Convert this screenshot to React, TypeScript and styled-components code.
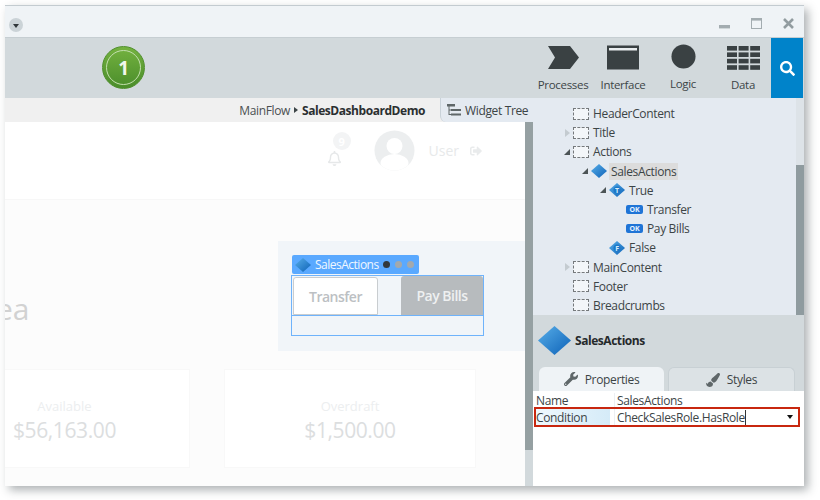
import React from 'react';
import styled, { createGlobalStyle } from 'styled-components';
import { FaPaintBrush, FaRegBell, FaSearch, FaSignOutAlt, FaWrench } from 'react-icons/fa';

const GlobalStyle = createGlobalStyle`
  html, body {
    margin: 0;
    padding: 0;
    background: #fff;
  }
  body {
    font-family: "Open Sans", "Noto Sans", sans-serif;
    font-size: 12px;
    letter-spacing: -0.35px;
    color: #3c4446;
  }
`;

const Page = styled.div`
  width: 820px;
  height: 500px;
  padding: 5px 16px 14px 5px;
  box-sizing: border-box;
  overflow: hidden;
`;

const Window = styled.div`
  width: 799px;
  height: 481px;
  display: flex;
  flex-direction: column;
  border-top: 1px solid #c3cbd0;
  box-sizing: border-box;
  background: #fff;
  box-shadow: 4px 4px 9px rgba(40, 50, 55, 0.38);
`;

const TitleBar = styled.div`
  height: 31px;
  flex-shrink: 0;
  background: #eff3f6;
  display: flex;
  align-items: center;
  padding: 3px 10px 0 4px;
  box-sizing: border-box;
`;

const MenuDot = styled.div`
  width: 14px;
  height: 14px;
  margin-top: 4px;
  border-radius: 50%;
  background: #cbd3d7;
  display: flex;
  align-items: center;
  justify-content: center;

  &::after {
    content: '';
    margin-top: 2px;
    border: 3px solid transparent;
    border-top: 4px solid #30373a;
    border-bottom: 0;
  }
`;

const WindowControls = styled.div`
  margin-left: auto;
  display: flex;
  gap: 21px;
  align-items: center;
`;

const Toolbar = styled.div`
  height: 61px;
  flex-shrink: 0;
  background: #d2d9dc;
  display: flex;
  align-items: stretch;
  border-top: 1px solid #c6ced2;
  box-sizing: border-box;
`;

const VersionBadge = styled.div`
  width: 43px;
  height: 43px;
  margin: 8px 0 0 97px;
  border-radius: 50%;
  background: linear-gradient(#74b23f, #4a8d2b);
  border: 1px solid #4f8f2c;
  box-sizing: border-box;
  display: flex;
  align-items: center;
  justify-content: center;

  span {
    width: 35px;
    height: 35px;
    border-radius: 50%;
    border: 1px solid #c3dfae;
    box-sizing: border-box;
    display: flex;
    align-items: center;
    justify-content: center;
    color: #f2f7ec;
    font-size: 19px;
    font-weight: 700;
  }
`;

const NavGroup = styled.div`
  margin-left: auto;
  display: flex;
  gap: 4px;
`;

const NavItem = styled.div`
  width: 56px;
  display: flex;
  flex-direction: column;
  align-items: center;
  padding-top: 7px;
  box-sizing: border-box;

  svg {
    height: 25px;
  }

  span {
    margin-top: 7px;
    font-size: 11.5px;
    letter-spacing: -0.3px;
    line-height: 16px;
    white-space: nowrap;
    color: #3d4547;
  }
`;

const SearchButton = styled.div`
  width: 32px;
  margin-right: 1px;
  background: #0083ca;
  color: #fff;
  display: flex;
  align-items: center;
  justify-content: center;
  font-size: 15px;
`;

const Workspace = styled.div`
  flex: 1;
  min-height: 0;
  display: flex;
`;

const LeftColumn = styled.div`
  width: 528px;
  flex-shrink: 0;
  display: flex;
  flex-direction: column;
`;

const BreadcrumbBar = styled.div`
  height: 24px;
  flex-shrink: 0;
  background: #f0f0f0;
  display: flex;
  align-items: center;
  justify-content: flex-end;
  color: #4a4f51;
`;

const Crumbs = styled.div`
  display: flex;
  align-items: center;
  gap: 4px;
  margin-right: 15px;

  b {
    font-weight: 700;
    letter-spacing: -0.45px;
    color: #2b2f30;
  }

  i {
    border: 3px solid transparent;
    border-left: 4px solid #3c4446;
    border-right: 0;
  }
`;

const TreeTab = styled.div`
  width: 93px;
  height: 24px;
  background: #e4eaf1;
  border-left: 1px solid #c9d2d9;
  border-bottom-left-radius: 6px;
  box-sizing: border-box;
  display: flex;
  align-items: center;
  gap: 4px;
  padding-left: 6px;
  color: #3c4446;
`;

const CanvasFrame = styled.div`
  flex: 1;
  min-height: 0;
  display: flex;
`;

const Canvas = styled.div`
  flex: 1;
  min-width: 0;
  overflow: hidden;
  background: #fcfcfc;
  display: flex;
  flex-direction: column;
`;

const UserBar = styled.div`
  height: 78px;
  flex-shrink: 0;
  background: #fff;
  border-bottom: 1px solid #f7f7f7;
  box-sizing: border-box;
  display: flex;
  align-items: center;
  justify-content: flex-end;
  padding: 0 43px 20px 0;
  color: #e9ebec;
  letter-spacing: 0;
`;

const BellWrap = styled.div`
  position: relative;
  width: 16px;
  display: flex;
  font-size: 15px;
  color: #e6e8e9;
  margin-top: 16px;
`;

const BellCount = styled.span`
  position: absolute;
  left: 6px;
  top: -19px;
  width: 18px;
  height: 18px;
  border-radius: 50%;
  background: #f3f4f5;
  color: #fff;
  font-size: 11px;
  font-weight: 700;
  display: flex;
  align-items: center;
  justify-content: center;
`;

const Avatar = styled.svg`
  width: 41px;
  height: 41px;
  margin: 0 14px 0 31px;
`;

const UserName = styled.span`
  font-size: 14px;
  color: #e7e9ea;
  margin-right: 11px;
`;

const HeroRow = styled.div`
  height: 169px;
  flex-shrink: 0;
  display: flex;
  align-items: flex-start;
  justify-content: space-between;
`;

const ClippedTitle = styled.div`
  font-size: 30px;
  line-height: 40px;
  margin: 89px 0 0 -9px;
  letter-spacing: 0;
  color: #d2d2d2;
`;

const SelectionArea = styled.div`
  width: 247px;
  height: 110px;
  margin-top: 41px;
  background: #f1f5f9;
  padding: 14px 0 0 13px;
  box-sizing: border-box;
`;

const WidgetLabel = styled.div`
  width: 127px;
  height: 19px;
  margin-left: 1px;
  background: #5aa9ff;
  border-radius: 2px;
  display: flex;
  align-items: center;
  padding-left: 3px;
  box-sizing: border-box;
  gap: 4px;
  color: #f0f7ff;
  font-size: 12px;
  letter-spacing: -0.5px;
`;

const StateDot = styled.span<{ $active?: boolean }>`
  width: 7px;
  height: 7px;
  border-radius: 50%;
  background: ${({ $active }) => ($active ? '#32383c' : '#a3a9ad')};
  flex-shrink: 0;
`;

const DotRow = styled.div`
  display: flex;
  gap: 5px;
`;

const WidgetBody = styled.div`
  width: 193px;
  margin-top: 1px;
  border: 1px solid #6fb3fb;
  box-sizing: border-box;
`;

const ButtonRow = styled.div`
  height: 39px;
  display: flex;
  justify-content: space-between;
  align-items: flex-end;
  padding-left: 1px;
  border-bottom: 1px solid #6fb3fb;
  box-sizing: content-box;
`;

const PreviewButton = styled.div<{ $primary?: boolean }>`
  width: ${({ $primary }) => ($primary ? '82px' : '85px')};
  height: ${({ $primary }) => ($primary ? '39px' : '38px')};
  box-sizing: border-box;
  border-radius: 3px 3px 0 0;
  display: flex;
  align-items: center;
  justify-content: center;
  font-size: 14px;
  font-weight: 600;
  letter-spacing: -0.5px;
  background: ${({ $primary }) => ($primary ? '#b7bbbe' : '#fff')};
  color: ${({ $primary }) => ($primary ? '#eef0f1' : '#bcc0c3')};
  border: ${({ $primary }) => ($primary ? '0' : '1px solid #c9cdd0')};
`;

const EmptyRow = styled.div`
  height: 19px;
`;

const CardRow = styled.div`
  display: flex;
  gap: 34px;
`;

const Card = styled.div<{ $width: number; $clipped?: boolean }>`
  width: ${({ $width }) => $width}px;
  height: 99px;
  background: #fff;
  border: 1px solid #f8f8f8;
  border-left-width: ${({ $clipped }) => ($clipped ? 0 : 1)}px;
  padding: 27px ${({ $clipped }) => ($clipped ? 65 : 0)}px 0 0;
  box-sizing: border-box;
  display: flex;
  flex-direction: column;
  align-items: center;
`;

const CardLabel = styled.div`
  font-size: 13px;
  line-height: 18px;
  letter-spacing: 0;
  color: #eceeef;
`;

const CardValue = styled.div`
  margin-top: 1px;
  font-size: 21px;
  line-height: 28px;
  letter-spacing: -0.4px;
  color: #dcdedf;
`;

const CanvasScrollbar = styled.div`
  width: 8px;
  flex-shrink: 0;
  background: #d2d9dc;

  &::before {
    content: '';
    display: block;
    height: 328px;
    background: #95a0a2;
  }
`;

const RightColumn = styled.div`
  flex: 1;
  min-width: 0;
  display: flex;
  flex-direction: column;
`;

const TreePanel = styled.div`
  height: 217px;
  flex-shrink: 0;
  display: flex;
  background: #e4eaf1;
`;

const TreeList = styled.div`
  flex: 1;
  padding-top: 6px;
  box-sizing: border-box;
`;

const TreeRow = styled.div<{ $indent: number }>`
  height: 19.2px;
  display: flex;
  align-items: center;
  padding-left: ${({ $indent }) => $indent}px;
  color: #3c4446;
`;

const Expander = styled.span<{ $state?: 'open' | 'closed' }>`
  width: 10px;
  flex-shrink: 0;
  display: flex;
  align-items: center;

  &::before {
    content: '';
    display: ${({ $state }) => ($state ? 'block' : 'none')};
    ${({ $state }) =>
      $state === 'open'
        ? 'border-style: solid; border-width: 0 0 6px 6px; border-color: transparent transparent #4c5456 transparent; margin-left: 1px;'
        : 'border-style: solid; border-width: 4px 0 4px 5px; border-color: transparent transparent transparent #c4cbd0; margin-left: 2px;'}
  }
`;

const DashedBox = styled.span`
  width: 16px;
  height: 12px;
  background: #f3f6f9;
  border: 1px dashed #75797c;
  box-sizing: border-box;
  margin-right: 2px;
  flex-shrink: 0;
`;

const TreeDiamond = styled.span`
  display: flex;
  margin-right: 2px;
`;

const TreeText = styled.span<{ $selected?: boolean }>`
  line-height: 17px;
  padding: 0 2px;
  background: ${({ $selected }) => ($selected ? '#dcdcdc' : 'transparent')};
`;

const OkChip = styled.span`
  width: 17px;
  height: 9px;
  border-radius: 2px;
  background: #1f74d6;
  color: #e6f2ff;
  font-size: 7px;
  font-weight: 700;
  line-height: 9px;
  letter-spacing: 0;
  text-align: center;
  margin-right: 2px;
  flex-shrink: 0;
`;

const TreeScrollbar = styled.div`
  width: 8px;
  flex-shrink: 0;
  display: flex;
  flex-direction: column;
  justify-content: flex-end;
  background: #dde3e8;

  &::before {
    content: '';
    height: 150px;
    background: #8f9b9f;
  }
`;

const DetailPanel = styled.div`
  height: 76px;
  flex-shrink: 0;
  background: #d2d9dc;
  display: flex;
  flex-direction: column;
`;

const DetailHeader = styled.div`
  height: 52px;
  display: flex;
  align-items: center;
  gap: 4px;
  padding: 0 0 2px 5px;
  box-sizing: border-box;
  font-weight: 700;
  letter-spacing: -0.45px;
  color: #25292b;
`;

const Tabs = styled.div`
  display: flex;
  gap: 4px;
  padding-left: 6px;
`;

const Tab = styled.div<{ $active?: boolean }>`
  width: ${({ $active }) => ($active ? '125px' : '127px')};
  height: 24px;
  box-sizing: border-box;
  border-radius: 6px 6px 0 0;
  background: ${({ $active }) => ($active ? '#eff3f6' : '#dce2e5')};
  border: ${({ $active }) => ($active ? '0' : '1px solid #c8d0d4')};
  border-bottom: 0;
  display: flex;
  align-items: center;
  justify-content: center;
  gap: 7px;
  color: #3c4446;

  svg {
    font-size: 14px;
    color: #5f6769;
  }
`;

const PropertyGrid = styled.div`
  flex: 1;
  min-height: 0;
  background: #fff;
  padding-left: 1px;
`;

const PropertyRow = styled.div<{ $focused?: boolean }>`
  height: ${({ $focused }) => ($focused ? '20px' : '16px')};
  width: 266px;
  display: flex;
  align-items: center;
  box-sizing: border-box;
  border: ${({ $focused }) => ($focused ? '2px solid #c8270f' : '0')};
  padding: ${({ $focused }) => ($focused ? '0' : '2px 0 0 2px')};
  color: #3c4446;
`;

const PropertyName = styled.div<{ $highlight?: boolean }>`
  width: 79px;
  height: 100%;
  display: flex;
  align-items: center;
  flex-shrink: 0;
  background: ${({ $highlight }) =>
    $highlight ? 'linear-gradient(90deg, #eff8fd, #d5ebf8 95%, #fff 95%)' : 'transparent'};
  border-right: 1px solid #edf0f2;
  box-sizing: border-box;
`;

const PropertyValue = styled.div`
  flex: 1;
  display: flex;
  align-items: center;
  padding-left: 2px;
`;

const Caret = styled.span`
  width: 1px;
  height: 15px;
  background: #333;
`;

const DropArrow = styled.span`
  margin-left: auto;
  margin-right: 5px;
  border: 3px solid transparent;
  border-top: 4px solid #111;
  border-bottom: 0;
`;

function Diamond({ size, letter }: { size: number; letter?: string }) {
  const id = `diamond-${size}-${letter ?? 'x'}`;
  return (
    <svg width={size} height={size} viewBox="0 0 32 32" style={{ flexShrink: 0 }}>
      <defs>
        <linearGradient id={id} x1="0" y1="0" x2="1" y2="1">
          <stop offset="0" stopColor="#58aee8" />
          <stop offset="1" stopColor="#0d62b8" />
        </linearGradient>
      </defs>
      <path d="M16 2 L32 16 L16 30 L0 16 Z" fill={`url(#${id})`} />
      {letter && (
        <>
          <circle cx="16" cy="16" r="7" fill="#1c78c8" />
          <text x="16" y="21" textAnchor="middle" fontSize="14" fontWeight="700" fill="#d8ecfa">
            {letter}
          </text>
        </>
      )}
    </svg>
  );
}

function TreeIcon() {
  return (
    <svg width="14" height="14" viewBox="0 0 14 14" fill="#5f6769">
      <rect x="0" y="1" width="8" height="2.5" />
      <rect x="1.5" y="3" width="1" height="9" />
      <rect x="4" y="6" width="10" height="2" />
      <rect x="4" y="10.5" width="10" height="2" />
      <rect x="2" y="6.5" width="2" height="1" />
      <rect x="2" y="11" width="2" height="1" />
    </svg>
  );
}

function DataIcon() {
  const rows = [0, 6.4, 12.8, 19.2];
  const cols = [0, 11.6, 23.2];
  return (
    <svg width="33" height="25" viewBox="0 0 33 25" fill="#3a4143">
      {rows.map((y) => cols.map((x) => <rect key={`${x}-${y}`} x={x} y={y + 1} width="10" height="4.6" />))}
    </svg>
  );
}

export default function App() {
  return (
    <Page>
      <GlobalStyle />
      <Window>
        <TitleBar>
          <MenuDot />
          <WindowControls>
            <svg width="11" height="11" viewBox="0 0 11 11">
              <rect x="0" y="7" width="11" height="3.4" fill="#a3acb0" />
            </svg>
            <svg width="11" height="11" viewBox="0 0 11 11">
              <rect x="0.5" y="0.5" width="10" height="10" fill="none" stroke="#a3acb0" />
              <rect x="0" y="0" width="11" height="2.6" fill="#a3acb0" />
            </svg>
            <svg width="11" height="11" viewBox="0 0 11 11">
              <path d="M1 1 L10 10 M10 1 L1 10" stroke="#929ca0" strokeWidth="2.6" />
            </svg>
          </WindowControls>
        </TitleBar>

        <Toolbar>
          <VersionBadge>
            <span>1</span>
          </VersionBadge>
          <NavGroup>
            <NavItem>
              <svg width="33" height="25" viewBox="0 0 33 25">
                <path d="M1 1 H23 L32 12.5 L23 24 H1 L8 12.5 Z" fill="#3a4143" />
              </svg>
              <span>Processes</span>
            </NavItem>
            <NavItem>
              <svg width="32" height="25" viewBox="0 0 32 25">
                <rect x="0" y="0.5" width="32" height="24" fill="#3a4143" />
                <rect x="2" y="3" width="28" height="2.5" fill="#e8ecee" />
              </svg>
              <span>Interface</span>
            </NavItem>
            <NavItem>
              <svg width="27" height="27" viewBox="0 0 27 27" style={{ marginTop: -1 }}>
                <circle cx="13.5" cy="13.5" r="13" fill="#3a4143" />
              </svg>
              <span>Logic</span>
            </NavItem>
            <NavItem>
              <DataIcon />
              <span>Data</span>
            </NavItem>
          </NavGroup>
          <SearchButton>
            <FaSearch />
          </SearchButton>
        </Toolbar>

        <Workspace>
          <LeftColumn>
            <BreadcrumbBar>
              <Crumbs>
                MainFlow
                <i />
                <b>SalesDashboardDemo</b>
              </Crumbs>
              <TreeTab>
                <TreeIcon />
                Widget Tree
              </TreeTab>
            </BreadcrumbBar>
            <CanvasFrame>
              <Canvas>
                <UserBar>
                  <BellWrap>
                    <FaRegBell />
                    <BellCount>9</BellCount>
                  </BellWrap>
                  <Avatar viewBox="0 0 41 41">
                    <defs>
                      <clipPath id="avatar-clip">
                        <circle cx="20.5" cy="20.5" r="20" />
                      </clipPath>
                    </defs>
                    <circle cx="20.5" cy="20.5" r="20" fill="#eceeef" />
                    <g clipPath="url(#avatar-clip)" fill="#fff">
                      <circle cx="20.5" cy="16" r="8" />
                      <ellipse cx="20.5" cy="33" rx="14" ry="9" />
                    </g>
                  </Avatar>
                  <UserName>User</UserName>
                  <FaSignOutAlt />
                </UserBar>
                <HeroRow>
                  <ClippedTitle>ea</ClippedTitle>
                  <SelectionArea>
                    <WidgetLabel>
                      <Diamond size={16} />
                      SalesActions
                      <DotRow>
                        <StateDot $active />
                        <StateDot />
                        <StateDot />
                      </DotRow>
                    </WidgetLabel>
                    <WidgetBody>
                      <ButtonRow>
                        <PreviewButton>Transfer</PreviewButton>
                        <PreviewButton $primary>Pay Bills</PreviewButton>
                      </ButtonRow>
                      <EmptyRow />
                    </WidgetBody>
                  </SelectionArea>
                </HeroRow>
                <CardRow>
                  <Card $width={185} $clipped>
                    <CardLabel>Available</CardLabel>
                    <CardValue>$56,163.00</CardValue>
                  </Card>
                  <Card $width={252}>
                    <CardLabel>Overdraft</CardLabel>
                    <CardValue>$1,500.00</CardValue>
                  </Card>
                </CardRow>
              </Canvas>
              <CanvasScrollbar />
            </CanvasFrame>
          </LeftColumn>

          <RightColumn>
            <TreePanel>
              <TreeList>
                <TreeRow $indent={30}>
                  <Expander />
                  <DashedBox />
                  <TreeText>HeaderContent</TreeText>
                </TreeRow>
                <TreeRow $indent={30}>
                  <Expander $state="closed" />
                  <DashedBox />
                  <TreeText>Title</TreeText>
                </TreeRow>
                <TreeRow $indent={30}>
                  <Expander $state="open" />
                  <DashedBox />
                  <TreeText>Actions</TreeText>
                </TreeRow>
                <TreeRow $indent={48}>
                  <Expander $state="open" />
                  <TreeDiamond>
                    <Diamond size={16} />
                  </TreeDiamond>
                  <TreeText $selected>SalesActions</TreeText>
                </TreeRow>
                <TreeRow $indent={66}>
                  <Expander $state="open" />
                  <TreeDiamond>
                    <Diamond size={16} letter="T" />
                  </TreeDiamond>
                  <TreeText>True</TreeText>
                </TreeRow>
                <TreeRow $indent={83}>
                  <Expander />
                  <OkChip>OK</OkChip>
                  <TreeText>Transfer</TreeText>
                </TreeRow>
                <TreeRow $indent={83}>
                  <Expander />
                  <OkChip>OK</OkChip>
                  <TreeText>Pay Bills</TreeText>
                </TreeRow>
                <TreeRow $indent={66}>
                  <Expander />
                  <TreeDiamond>
                    <Diamond size={16} letter="F" />
                  </TreeDiamond>
                  <TreeText>False</TreeText>
                </TreeRow>
                <TreeRow $indent={30}>
                  <Expander $state="closed" />
                  <DashedBox />
                  <TreeText>MainContent</TreeText>
                </TreeRow>
                <TreeRow $indent={30}>
                  <Expander />
                  <DashedBox />
                  <TreeText>Footer</TreeText>
                </TreeRow>
                <TreeRow $indent={30}>
                  <Expander />
                  <DashedBox />
                  <TreeText>Breadcrumbs</TreeText>
                </TreeRow>
              </TreeList>
              <TreeScrollbar />
            </TreePanel>
            <DetailPanel>
              <DetailHeader>
                <Diamond size={33} />
                SalesActions
              </DetailHeader>
              <Tabs>
                <Tab $active>
                  <FaWrench />
                  Properties
                </Tab>
                <Tab>
                  <FaPaintBrush />
                  Styles
                </Tab>
              </Tabs>
            </DetailPanel>
            <PropertyGrid>
              <PropertyRow>
                <PropertyName>Name</PropertyName>
                <PropertyValue>SalesActions</PropertyValue>
              </PropertyRow>
              <PropertyRow $focused>
                <PropertyName $highlight>Condition</PropertyName>
                <PropertyValue>
                  CheckSalesRole.HasRole
                  <Caret />
                  <DropArrow />
                </PropertyValue>
              </PropertyRow>
            </PropertyGrid>
          </RightColumn>
        </Workspace>
      </Window>
    </Page>
  );
}
